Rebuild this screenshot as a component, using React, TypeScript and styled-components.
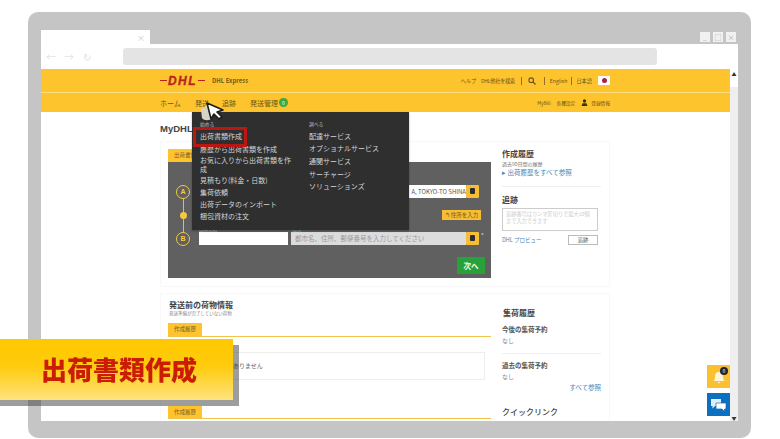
import React from 'react';
import styled, { createGlobalStyle } from 'styled-components';

const Global = createGlobalStyle`
  html, body { margin: 0; padding: 0; background: #fff; }
  body { width: 780px; height: 439px; overflow: hidden; font-family: "Noto Sans CJK JP", "Noto Sans", sans-serif; color: #555; }
`;

const Stage = styled.div`
  position: relative; width: 780px; height: 439px; overflow: hidden; padding-top: 12px; box-sizing: border-box; filter: blur(0.6px);
`;
const Frame = styled.div`
  margin-left: 28px; width: 723px; height: 426px; box-sizing: border-box; padding: 18px 13px 17px;
  background: #c5c5c5; border-radius: 10px; display: flex; flex-direction: column;
`;
const TabRow = styled.div`display: flex; height: 14px; align-items: flex-start;`;
const Tab = styled.div`
  width: 109px; height: 14px; background: #fff; display: flex; justify-content: flex-end; align-items: center;
  padding-right: 5px; box-sizing: border-box; color: #ccc; font-size: 8px;
`;
const WinControls = styled.div`margin-left: auto; display: flex; gap: 3px; margin-top: 2px; margin-right: 2px;`;
const WinButton = styled.div`
  width: 10px; height: 10px; background: #f1f1f1; color: #aaa; font-size: 7px; line-height: 10px; text-align: center;
`;
const Toolbar = styled.div`
  height: 25px; background: #fff; display: flex; align-items: center; padding-left: 5px; gap: 8px; box-sizing: border-box;
`;
const NavGlyph = styled.span`width: 10px; color: #e4e4e4; font-size: 10px; line-height: 10px; text-align: center;`;
const UrlBar = styled.div`width: 534px; height: 17px; background: #e4e4e4; border-radius: 3px; margin-left: 23px;`;
const Viewport = styled.div`flex: 1; display: flex; min-height: 0;`;
const Main = styled.div`width: 689px; display: flex; flex-direction: column; min-height: 0; background: #fff;`;
const Scrollbar = styled.div`
  width: 8px; background: #efefef; display: flex; flex-direction: column; justify-content: space-between; align-items: center;
`;
const ScrollCap = styled.div`
  width: 8px; height: ${p => p.$h}px; background: ${p => p.$bg}; color: #333; font-size: 5px; line-height: 10px; text-align: center;
`;
const Header = styled.header`background: #fec42e; height: 43px; display: flex; flex-direction: column; flex: none;`;
const TopRow = styled.div`
  height: 24px; display: flex; align-items: center; padding: 0 120px 0 119px; border-bottom: 1px solid #ffdf80; box-sizing: border-box; font-size: 5.2px; color: #6b5518;
`;
const NavRow = styled.div`
  height: 19px; display: flex; align-items: center; padding: 0 120px 0 119px; font-size: 7px; color: #6b5518;
`;
const Logo = styled.div`width: 45px; display: flex; align-items: center; gap: 1px; color: #b9221c; margin-right: 7px;`;
const LogoStripe = styled.span`flex: 1; height: 1.5px; background: #b9221c;`;
const LogoWord = styled.span`font: italic 900 12px/10px "Liberation Sans", sans-serif; letter-spacing: 1.5px; -webkit-text-stroke: 0.3px #b9221c;`;
const Brand = styled.span`font-size: 6px; font-weight: 700; color: #75591a;`;
const Spacer = styled.div`flex: 1;`;
const Bar = styled.span`width: 1px; height: 8px; background: #8f7326; margin: 0 ${p => p.$r ?? p.$m}px 0 ${p => p.$m}px;`;
const TopText = styled.span`margin-right: ${p => p.$r || 0}px; white-space: nowrap; letter-spacing: ${p => p.$ls || 0}px;`;
const Flag = styled.div`
  width: 12px; height: 9px; background: #fff; border-radius: 1px; display: flex; align-items: center; justify-content: center; margin-left: 6px;
`;
const FlagDot = styled.span`width: 5px; height: 5px; border-radius: 50%; background: #a8224a;`;
const NavItem = styled.span`width: ${p => p.$w}px; white-space: nowrap;`;
const Badge = styled.span`
  width: 9px; height: 9px; border-radius: 50%; background: #39a845; color: #fff; font-size: 5px; line-height: 9px; text-align: center;
`;
const SmallNav = styled.span`font-size: 4.7px; margin-left: ${p => p.$l || 0}px; white-space: nowrap;`;

const Page = styled.main`flex: 1; min-height: 0; overflow: hidden; padding: 10px 120px 0 119px; box-sizing: border-box;`;
const PageTitle = styled.h1`margin: 0 0 6px; font: 700 9.5px/13px "Liberation Sans", sans-serif; color: #444; height: 13px;`;
const Card = styled.section`
  display: grid; grid-template-columns: 331px 119px; border: 1px solid #f8f8f8; box-sizing: border-box; height: ${p => p.$h}px; margin-bottom: 6px;
`;
const LeftCol = styled.div`padding: ${p => p.$t}px 0 0 7px; box-sizing: border-box;`;
const RightCol = styled.div`padding: ${p => p.$t}px 10px 0 10px; box-sizing: border-box;`;
const YellowTab = styled.div`
  width: 34px; height: 12.5px; background: #fec42e; color: #77602a; font-size: 5.5px; line-height: 13px; text-align: center; margin-top: ${p => p.$t || 0}px;
`;
const Panel = styled.div`
  width: 323px; height: 116px; background: #606060; box-sizing: border-box; padding: 23px 6px 0 8px; display: grid; grid-template-columns: 14px 1fr; grid-template-rows: 61px auto;
`;
const Rail = styled.div`display: flex; flex-direction: column; align-items: center;`;
const Stop = styled.div`
  width: 14px; height: 14px; border-radius: 50%; border: 1.5px solid #f5c842; box-sizing: border-box; color: #f5c842; font: 700 7px/11px "Liberation Sans", sans-serif; text-align: center; flex: none;
`;
const RailLine = styled.div`flex: 1; width: 1px; background: #e9bd45;`;
const RailDot = styled.div`width: 7px; height: 7px; border-radius: 50%; background: #f5c842; flex: none;`;
const Fields = styled.div`padding-left: 9px; display: flex; flex-direction: column;`;
const FieldRow = styled.div`display: flex; height: 13px; align-items: stretch; margin-top: ${p => p.$t}px;`;
const AddressInput = styled.div`
  width: 267px; background: #fff; color: #555; font-size: 6px; line-height: 13px; display: flex; justify-content: flex-end; overflow: hidden; white-space: nowrap; box-sizing: border-box;
`;
const CompanyInput = styled.div`width: 89px; background: #fff; margin-right: 3px;`;
const CityInput = styled.div`
  width: 175px; background: #dcdcdc; color: #999; font-size: 6.5px; line-height: 13px; padding-left: 4px; white-space: nowrap; overflow: hidden; box-sizing: border-box;
`;
const BookButton = styled.div`width: 13px; background: #f7bd35; border-radius: 1px; display: flex; align-items: center; justify-content: center;`;
const BookGlyph = styled.span`width: 5px; height: 6px; background: #2e2e2e; border-radius: 1px;`;
const Star = styled.span`color: #ddd; font-size: 6px; line-height: 8px; margin-left: 2px;`;
const AddressAction = styled.div`
  width: 39px; height: 10px; background: #f7bd35; color: #6b5518; font-size: 5.5px; line-height: 10px; text-align: center; margin: 12px 0 0 243px; white-space: nowrap;
`;
const Labels = styled.div`display: flex; height: 6px; margin-top: 6px; font-size: 4.5px; line-height: 6px; color: #ccc; gap: 75px;`;
const NextRow = styled.div`grid-column: 1 / 3; display: flex; justify-content: flex-end; padding-top: 11px;`;
const NextButton = styled.div`
  width: 28px; height: 17px; background: #27a23a; color: #f2fff2; font-size: 7.5px; font-weight: 700; line-height: 17px; text-align: center;
`;
const Heading = styled.h2`margin: 0; font-size: 8px; line-height: 11px; font-weight: 700; color: #444;`;
const Tiny = styled.p`margin: ${p => p.$t || 0}px 0 0; font-size: 5px; line-height: 7px; color: #777;`;
const BlueLink = styled.a`
  display: block; margin-top: ${p => p.$t || 0}px; font-size: 6.5px; line-height: 9px; color: #4a87b8; white-space: nowrap; text-align: ${p => p.$right ? 'right' : 'left'};
`;
const Rule = styled.div`height: 1px; background: #efefef; margin: ${p => p.$t}px 0 ${p => p.$b}px;`;
const TrackBox = styled.div`
  width: 96px; height: 23px; border: 1px solid #ccc; box-sizing: border-box; margin-top: 3px; padding: 1px 3px; color: #ccc; font-size: 5.2px; line-height: 7px;
`;
const TrackRow = styled.div`display: flex; justify-content: space-between; align-items: center; width: 96px; margin-top: 4px;`;
const TrackLink = styled.a`font-size: 5.5px; color: #4a87b8;`;
const TrackButton = styled.div`
  width: 30px; height: 10px; border: 1px solid #bbb; box-sizing: border-box; font-size: 5.2px; line-height: 8px; text-align: center; color: #555;
`;
const SectionTitle = styled.h3`margin: -1px 0 0 1px; font-size: 8px; line-height: 11px; color: #444; font-weight: 700;`;
const Sub = styled.p`margin: 0 0 0 1px; font-size: 4.5px; line-height: 7px; color: #888;`;
const YellowLine = styled.div`
  border-top: 1px solid #f3c24c; width: 323px; height: ${p => p.$h}px; box-sizing: border-box; padding: ${p => p.$p || 0}px 6px 0 0;
`;
const EmptyBox = styled.div`
  height: 28px; border: 1px solid #eee; box-sizing: border-box; font-size: 6px; line-height: 26px; color: #666; padding-left: 46px;
`;
const SubHead = styled.h4`margin: ${p => p.$t || 0}px 0 0; font-size: 6.5px; line-height: 9px; font-weight: 700; color: #555;`;
const None = styled.p`margin: 2px 0 0; font-size: 6px; line-height: 9px; color: #888;`;
const QuickTitle = styled.h3`margin: 14px 0 0; font-size: 8px; line-height: 11px; font-weight: 500; color: #444;`;

const Menu = styled.nav`
  position: absolute; left: 192px; top: 112px; width: 217px; height: 118px; background: #2f2f2f; box-sizing: border-box; padding: 8px 0 0 8px;
  display: grid; grid-template-columns: 109px 100px; color: #ddd; box-shadow: 0 1px 2px rgba(0,0,0,.3);
`;
const MenuCol = styled.div`display: flex; flex-direction: column;`;
const MenuCaption = styled.div`font-size: 4.8px; line-height: 7px; color: #bbb;`;
const MenuItem = styled.a`
  font-size: 7px; line-height: 8.5px; color: #d4d4d4; margin-top: ${p => p.$t}px; width: 92px; display: block;
`;
const Highlight = styled.div`
  position: absolute; left: 1px; top: 15px; width: 54px; height: 20px; border: 3.5px solid #bb1712; box-sizing: border-box;
`;
const Cursor = styled.svg`position: absolute; left: 198px; top: 98px; width: 28px; height: 24px;`;
const Banner = styled.div`
  position: absolute; left: -6px; top: 339px; width: 239px; height: 61px; box-sizing: border-box; padding-left: 47px;
  background: linear-gradient(#ffc800 0%, #ffcb0c 45%, #ffe37e 100%); box-shadow: 6px 6px 0 rgba(60, 60, 60, .5);
  color: #cb1d05; font-size: 26px; font-weight: 900; line-height: 60px; white-space: nowrap;
`;
const FloatBtn = styled.div`
  position: absolute; left: 707px; top: ${p => p.$t}px; width: 23px; height: 23px; background: ${p => p.$bg}; display: flex; align-items: center; justify-content: center;
`;
const Count = styled.span`
  position: absolute; right: 2px; top: 2px; width: 8px; height: 8px; border-radius: 50%; background: #222; color: #fff; font-size: 5px; line-height: 8px; text-align: center;
`;

export default function App() {
  return (
    <>
      <Global />
      <Stage>
        <Frame>
          <TabRow>
            <Tab>×</Tab>
            <WinControls>
              <WinButton>_</WinButton>
              <WinButton>□</WinButton>
              <WinButton>×</WinButton>
            </WinControls>
          </TabRow>
          <Toolbar>
            <NavGlyph>←</NavGlyph>
            <NavGlyph>→</NavGlyph>
            <NavGlyph>↻</NavGlyph>
            <UrlBar />
          </Toolbar>
          <Viewport>
            <Main>
              <Header>
                <TopRow>
                  <Logo>
                    <LogoStripe />
                    <LogoWord>DHL</LogoWord>
                    <LogoStripe />
                  </Logo>
                  <Brand>DHL Express</Brand>
                  <Spacer />
                  <TopText $r={5}>ヘルプ</TopText>
                  <TopText $ls={-0.3}>DHL他社を検索</TopText>
                  <Bar $m={6} />
                  <svg width="8" height="8" viewBox="0 0 8 8">
                    <circle cx="3.2" cy="3.2" r="2.3" fill="none" stroke="#6b5518" strokeWidth="1.1" />
                    <path d="M5 5 L7.5 7.5" stroke="#6b5518" strokeWidth="1.3" />
                  </svg>
                  <Bar $m={8} $r={5} />
                  <TopText>English</TopText>
                  <Bar $m={4} />
                  <TopText>日本語</TopText>
                  <Flag><FlagDot /></Flag>
                </TopRow>
                <NavRow>
                  <NavItem $w={35}>ホーム</NavItem>
                  <NavItem $w={27}>発送</NavItem>
                  <NavItem $w={28}>追跡</NavItem>
                  <NavItem $w={29}>発送管理</NavItem>
                  <Badge>0</Badge>
                  <Spacer />
                  <SmallNav>MyBill</SmallNav>
                  <SmallNav $l={6}>各種設定</SmallNav>
                  <svg width="7" height="7" viewBox="0 0 7 7" style={{ marginLeft: 6 }}>
                    <circle cx="3.5" cy="2" r="1.7" fill="#3d3413" />
                    <path d="M0.5 7 L1.5 4.3 H5.5 L6.5 7 Z" fill="#3d3413" />
                  </svg>
                  <SmallNav $l={3}>登録情報</SmallNav>
                </NavRow>
              </Header>
              <Page>
                <PageTitle>MyDHL</PageTitle>
                <Card $h={146}>
                  <LeftCol $t={7}>
                    <YellowTab>出荷書類</YellowTab>
                    <Panel>
                      <Rail>
                        <Stop>A</Stop>
                        <RailLine />
                        <RailDot />
                        <RailLine />
                        <Stop>B</Stop>
                      </Rail>
                      <Fields>
                        <FieldRow $t={0}>
                          <AddressInput>A, TOKYO-TO SHINA</AddressInput>
                          <BookButton><BookGlyph /></BookButton>
                        </FieldRow>
                        <AddressAction>↰ 住所を入力</AddressAction>
                        <Labels><span>出荷先名</span><span>住所 *</span></Labels>
                        <FieldRow $t={0}>
                          <CompanyInput />
                          <CityInput>都市名、住所、郵便番号を入力してください</CityInput>
                          <BookButton><BookGlyph /></BookButton>
                          <Star>*</Star>
                        </FieldRow>
                      </Fields>
                      <NextRow><NextButton>次へ</NextButton></NextRow>
                    </Panel>
                  </LeftCol>
                  <RightCol $t={6}>
                    <Heading>作成履歴</Heading>
                    <Tiny $t={1}>過去90日間の履歴</Tiny>
                    <BlueLink $t={1}>▸ 出荷履歴をすべて参照</BlueLink>
                    <Rule $t={9} $b={7} />
                    <Heading>追跡</Heading>
                    <TrackBox>追跡番号はカンマ区切りで最大10個まで入力できます</TrackBox>
                    <TrackRow>
                      <TrackLink>DHL プロビュー</TrackLink>
                      <TrackButton>追跡</TrackButton>
                    </TrackRow>
                  </RightCol>
                </Card>
                <Card $h={140}>
                  <LeftCol $t={6}>
                    <SectionTitle>発送前の荷物情報</SectionTitle>
                    <Sub>発送準備が完了していない荷物</Sub>
                    <YellowTab $t={6}>作成履歴</YellowTab>
                    <YellowLine $h={70} $p={15}>
                      <EmptyBox>荷物はありません</EmptyBox>
                    </YellowLine>
                    <YellowTab>作成履歴</YellowTab>
                    <YellowLine $h={1} />
                  </LeftCol>
                  <RightCol $t={14}>
                    <SectionTitle>集荷履歴</SectionTitle>
                    <SubHead $t={7}>今後の集荷予約</SubHead>
                    <None>なし</None>
                    <Rule $t={8} $b={7} />
                    <SubHead>過去の集荷予約</SubHead>
                    <None>なし</None>
                    <BlueLink $right $t={2}>すべて参照</BlueLink>
                    <QuickTitle>クイックリンク</QuickTitle>
                  </RightCol>
                </Card>
              </Page>
            </Main>
            <Scrollbar>
              <ScrollCap $h={18} $bg="#fff">▲</ScrollCap>
              <ScrollCap $h={8} $bg="#efefef">▼</ScrollCap>
            </Scrollbar>
          </Viewport>
        </Frame>

        <Menu>
          <Highlight />
          <MenuCol>
            <MenuCaption>始める</MenuCaption>
            <MenuItem $t={5}>出荷書類作成</MenuItem>
            <MenuItem $t={4}>履歴から出荷書類を作成</MenuItem>
            <MenuItem $t={3}>お気に入りから出荷書類を作成</MenuItem>
            <MenuItem $t={3}>見積もり(料金・日数)</MenuItem>
            <MenuItem $t={3.5}>集荷依頼</MenuItem>
            <MenuItem $t={3.5}>出荷データのインポート</MenuItem>
            <MenuItem $t={3.5}>梱包資材の注文</MenuItem>
          </MenuCol>
          <MenuCol>
            <MenuCaption>調べる</MenuCaption>
            <MenuItem $t={5}>配達サービス</MenuItem>
            <MenuItem $t={3.5}>オプショナルサービス</MenuItem>
            <MenuItem $t={4}>通関サービス</MenuItem>
            <MenuItem $t={4.5}>サーチャージ</MenuItem>
            <MenuItem $t={4}>ソリューションズ</MenuItem>
          </MenuCol>
        </Menu>

        <Cursor viewBox="0 0 28 24">
          <path d="M3 12 C3 9 6 9 7 11 L7 8 C8 7 10 7 10 9 L14 13 L14 20 C12 23 6 23 4 20 Z" fill="#d8d3c4" />
          <path d="M9 5 L25 12 L19 14 L24 19 L21 21 L16 16 L13 21 Z" fill="#fff" stroke="#1c1c1c" strokeWidth="1.6" strokeLinejoin="round" />
        </Cursor>

        <Banner>出荷書類作成</Banner>

        <FloatBtn $t={365} $bg="#fbc02f">
          <svg width="14" height="14" viewBox="0 0 14 14">
            <path d="M7 2 C4 2 3 4 3 7 C3 9 2 10 1.5 11 H12.5 C12 10 11 9 11 7 C11 4 10 2 7 2 Z M5.5 12 H8.5 L7 13.5 Z" fill="#fff4d6" />
          </svg>
          <Count>0</Count>
        </FloatBtn>
        <FloatBtn $t={393} $bg="#0d6fc0">
          <svg width="17" height="14" viewBox="0 0 17 14">
            <path d="M1 1 H11 V8 H5 L2.5 10.5 V8 H1 Z" fill="#dfeefa" />
            <path d="M6 5 H16 V11 H14.5 V13.5 L12 11 H6 Z" fill="#fff" stroke="#0d6fc0" strokeWidth="0.7" />
          </svg>
        </FloatBtn>
      </Stage>
    </>
  );
}
